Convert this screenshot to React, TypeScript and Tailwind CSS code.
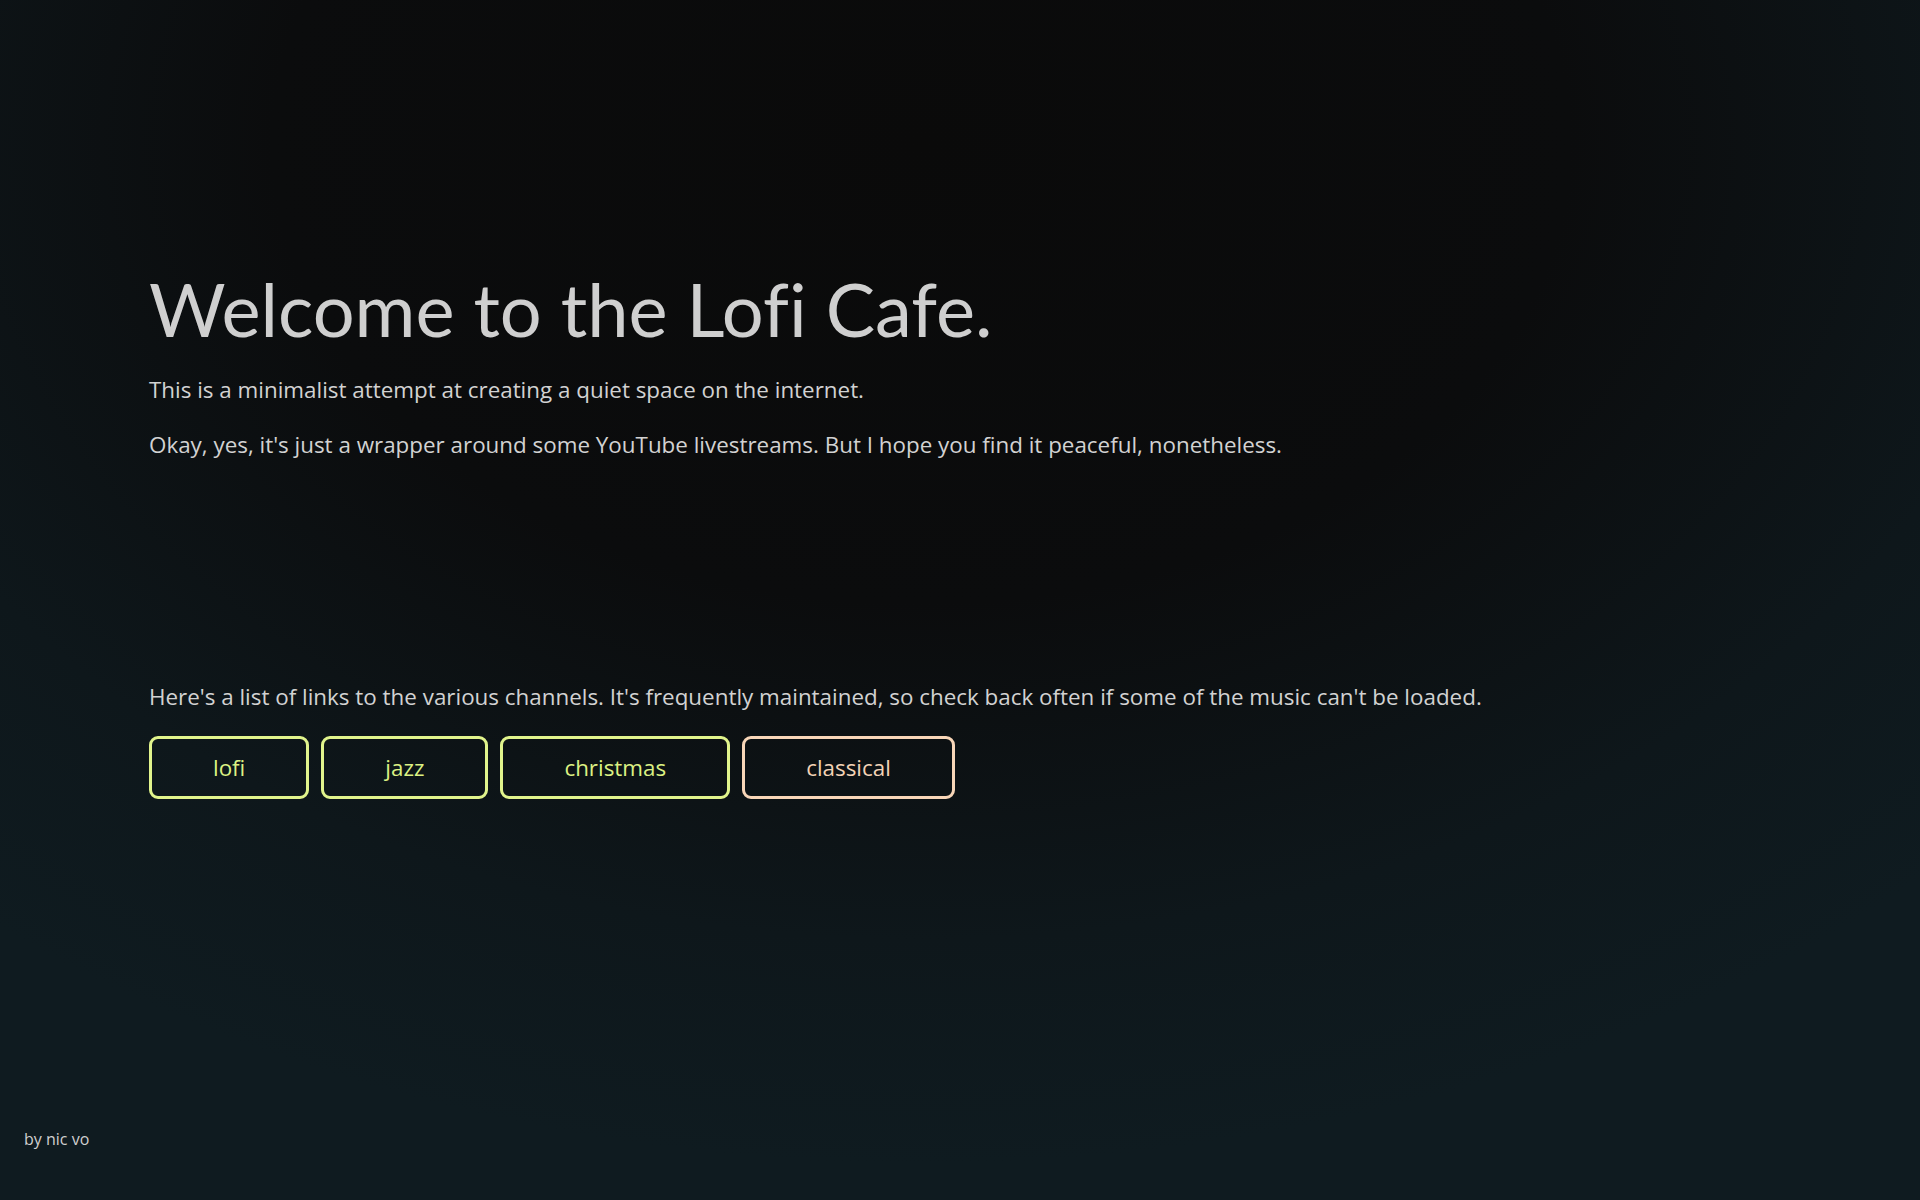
import React from "react";

const buttons = [
  { label: "lofi", cls: "border-[#e1f48c] text-[#dcf183]" },
  { label: "jazz", cls: "border-[#e1f48c] text-[#dcf183]" },
  { label: "christmas", cls: "border-[#e1f48c] text-[#dcf183]" },
  { label: "classical", cls: "border-[#f8d6b8] text-[#f3d3b6]" },
];

export default function App() {
  return (
    <div className="relative flex h-[1200px] w-full flex-col bg-[radial-gradient(ellipse_75%_85%_at_48%_12%,#0a0a0a_0%,#0b0c0d_45%,#0e171b_78%,#0f1b20_100%)] font-['Open_Sans',sans-serif] text-[#d2d2d2]">
      <main className="flex flex-col px-[149px] pt-[263px]">
        <h1 className="font-['Lato',sans-serif] text-[74px] font-normal leading-[92px] text-[#cfcfcf] [font-variant-ligatures:none]">
          Welcome to the Lofi Cafe.
        </h1>
        <p className="mt-[19px] text-[22.4px] leading-[32px]">
          This is a minimalist attempt at creating a quiet space on the internet.
        </p>
        <p className="mt-[23px] text-[22.4px] leading-[32px]">
          Okay, yes, it's just a wrapper around some YouTube livestreams. But I hope you find it peaceful, nonetheless.
        </p>
        <p className="mt-[220px] text-[22.4px] leading-[32px]">
          Here's a list of links to the various channels. It's frequently maintained, so check back often if some of the music can't be loaded.
        </p>
        <div className="mt-[23px] flex gap-[12px]">
          {buttons.map((b) => (
            <a
              key={b.label}
              className={`flex h-[63px] items-center justify-center rounded-[9px] border-[3px] px-[61px] text-[22.4px] ${b.cls}`}
            >
              {b.label}
            </a>
          ))}
        </div>
      </main>
      <footer className="mt-auto px-[24px] pb-[49px] text-[16px] text-[#cfcfcf]">by nic vo</footer>
    </div>
  );
}
